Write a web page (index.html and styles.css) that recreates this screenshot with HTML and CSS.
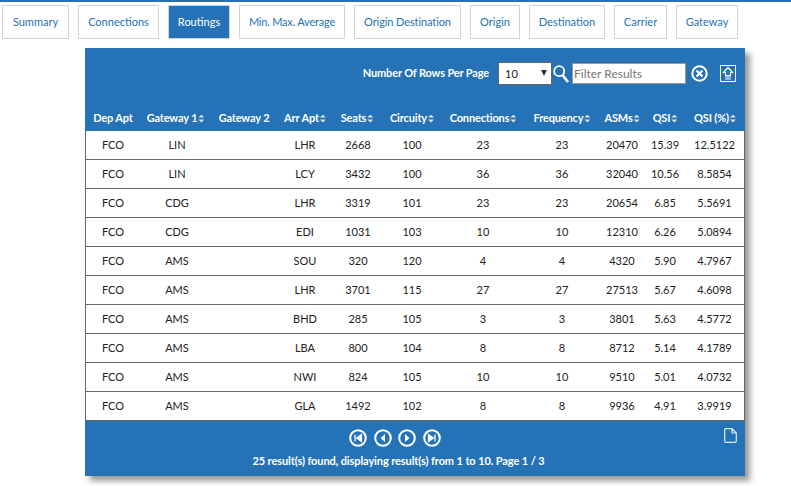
FILE: index.html
```html
<!DOCTYPE html>
<html lang="en">

<head>
    <meta charset="UTF-8">
    <title>Routings</title>
    <link rel="stylesheet" href="styles.css">
</head>

<body>
    <ul class="tabs">
        <li class="tab tab-summary">Summary</li>
        <li class="tab tab-connections">Connections</li>
        <li class="tab tab-routings active">Routings</li>
        <li class="tab tab-minmax">Min. Max. Average</li>
        <li class="tab tab-od">Origin Destination</li>
        <li class="tab tab-origin">Origin</li>
        <li class="tab tab-destination">Destination</li>
        <li class="tab tab-carrier">Carrier</li>
        <li class="tab tab-gateway">Gateway</li>
    </ul>

    <div class="panel">
        <div class="toolbar">
            <span class="rows-label">Number Of Rows Per Page</span>
            <div class="rows-select"><span>10</span><i class="caret"></i></div>
            <svg class="search-icon" width="16" height="18" viewBox="0 0 16 18">
                <circle cx="6.2" cy="6.2" r="5" fill="none" stroke="#fff" stroke-width="1.8" />
                <path d="M9.5 10 L15 17" stroke="#fff" stroke-width="2.6" />
            </svg>
            <div class="filter-input">Filter Results</div>
            <svg class="clear-icon" width="17" height="17" viewBox="0 0 17 17">
                <circle cx="8.5" cy="8.5" r="7.2" fill="none" stroke="#fff" stroke-width="2" />
                <path d="M5.5 5.5 L11.5 11.5 M11.5 5.5 L5.5 11.5" stroke="#fff" stroke-width="2.2" />
            </svg>
            <svg class="export-icon" width="16" height="17" viewBox="0 0 16 17">
                <rect x="0.5" y="0.5" width="15" height="16" fill="none" stroke="#fff" />
                <path d="M8 2.5 L12.5 7.5 H10.5 V10.5 H5.5 V7.5 H3.5 Z" fill="none" stroke="#fff" stroke-width="1.2" />
                <path d="M5 12 H11 M5 14 H11" stroke="#fff" stroke-width="1.2" />
            </svg>
        </div>

        <table class="grid">
            <thead>
                <tr>
                    <th class="c-dep">Dep Apt</th>
                    <th class="c-gw1 sort">Gateway 1</th>
                    <th class="c-gw2">Gateway 2</th>
                    <th class="c-arr sort">Arr Apt</th>
                    <th class="c-seats sort">Seats</th>
                    <th class="c-circ sort">Circuity</th>
                    <th class="c-conn sort">Connections</th>
                    <th class="c-freq sort">Frequency</th>
                    <th class="c-asm sort">ASMs</th>
                    <th class="c-qsi sort">QSI</th>
                    <th class="c-pct sort">QSI (%)</th>
                </tr>
            </thead>
            <tbody>
                <tr><td>FCO</td><td>LIN</td><td></td><td>LHR</td><td>2668</td><td>100</td><td>23</td><td>23</td><td>20470</td><td>15.39</td><td>12.5122</td></tr>
                <tr><td>FCO</td><td>LIN</td><td></td><td>LCY</td><td>3432</td><td>100</td><td>36</td><td>36</td><td>32040</td><td>10.56</td><td>8.5854</td></tr>
                <tr><td>FCO</td><td>CDG</td><td></td><td>LHR</td><td>3319</td><td>101</td><td>23</td><td>23</td><td>20654</td><td>6.85</td><td>5.5691</td></tr>
                <tr><td>FCO</td><td>CDG</td><td></td><td>EDI</td><td>1031</td><td>103</td><td>10</td><td>10</td><td>12310</td><td>6.26</td><td>5.0894</td></tr>
                <tr><td>FCO</td><td>AMS</td><td></td><td>SOU</td><td>320</td><td>120</td><td>4</td><td>4</td><td>4320</td><td>5.90</td><td>4.7967</td></tr>
                <tr><td>FCO</td><td>AMS</td><td></td><td>LHR</td><td>3701</td><td>115</td><td>27</td><td>27</td><td>27513</td><td>5.67</td><td>4.6098</td></tr>
                <tr><td>FCO</td><td>AMS</td><td></td><td>BHD</td><td>285</td><td>105</td><td>3</td><td>3</td><td>3801</td><td>5.63</td><td>4.5772</td></tr>
                <tr><td>FCO</td><td>AMS</td><td></td><td>LBA</td><td>800</td><td>104</td><td>8</td><td>8</td><td>8712</td><td>5.14</td><td>4.1789</td></tr>
                <tr><td>FCO</td><td>AMS</td><td></td><td>NWI</td><td>824</td><td>105</td><td>10</td><td>10</td><td>9510</td><td>5.01</td><td>4.0732</td></tr>
                <tr><td>FCO</td><td>AMS</td><td></td><td>GLA</td><td>1492</td><td>102</td><td>8</td><td>8</td><td>9936</td><td>4.91</td><td>3.9919</td></tr>
            </tbody>
        </table>

        <div class="footer">
            <div class="pager">
                <svg width="18" height="18" viewBox="0 0 18 18"><circle cx="9" cy="9" r="7.8" fill="none" stroke="#fff" stroke-width="2" /><path d="M6 5.5 V12.5 M12.5 5.5 L7.5 9 L12.5 12.5 Z" fill="#fff" stroke="#fff" stroke-width="1.2" /></svg>
                <svg width="18" height="18" viewBox="0 0 18 18"><circle cx="9" cy="9" r="7.8" fill="none" stroke="#fff" stroke-width="2" /><path d="M11 5 L6.5 9 L11 13 Z" fill="#fff" /></svg>
                <svg width="18" height="18" viewBox="0 0 18 18"><circle cx="9" cy="9" r="7.8" fill="none" stroke="#fff" stroke-width="2" /><path d="M7 5 L11.5 9 L7 13 Z" fill="#fff" /></svg>
                <svg width="18" height="18" viewBox="0 0 18 18"><circle cx="9" cy="9" r="7.8" fill="none" stroke="#fff" stroke-width="2" /><path d="M12 5.5 V12.5 M5.5 5.5 L10.5 9 L5.5 12.5 Z" fill="#fff" stroke="#fff" stroke-width="1.2" /></svg>
            </div>
            <div class="summary">25 result(s) found, displaying result(s) from 1 to 10. Page 1 / 3</div>
            <svg class="page-icon" width="13" height="15" viewBox="0 0 13 15">
                <path d="M1.5 0.7 H8 L12.3 5 V13 Q12.3 14.3 11 14.3 H2 Q0.7 14.3 0.7 13 V1.5 Z M8 0.7 V5 H12.3" fill="none" stroke="#dce8f4" stroke-width="1.2" />
            </svg>
        </div>
    </div>
</body>

</html>
```

FILE: styles.css
```css
* {
    box-sizing: border-box;
}

body {
    margin: 0;
    min-height: 486px;
    background-color: #fff;
    border-top: 2px solid #2573b6;
    font-family: "Lato", "Open Sans", sans-serif;
    font-size: 11px;
    color: #333;
}

/* Tabs */
.tabs {
    display: flex;
    gap: 9px;
    list-style: none;
    margin: 3px 0 0 2px;
    padding: 0;
}

.tab {
    height: 34px;
    line-height: 32px;
    text-align: center;
    border: 1px solid #d4d4d4;
    color: #2573b6;
    white-space: nowrap;
}

.tab.active {
    background-color: #2573b6;
    color: #fff;
}

.tab-summary { width: 67px; }
.tab-connections { width: 81px; }
.tab-routings { width: 62px; }
.tab-minmax { width: 106px; letter-spacing: -0.2px; }
.tab-od { width: 107px; letter-spacing: -0.1px; }
.tab-origin { width: 50px; }
.tab-destination { width: 76px; }
.tab-carrier { width: 53px; }
.tab-gateway { width: 62px; }

/* Panel */
.panel {
    width: 660px;
    margin: 9px 0 0 85px;
    background-color: #2573b6;
    box-shadow: 5px 5px 6px rgba(0, 0, 0, 0.4);
}

.toolbar {
    display: flex;
    align-items: center;
    height: 55px;
    padding: 0 9px 4px 0;
    justify-content: flex-end;
    color: #fff;
}

.rows-label {
    font-weight: 700;
    letter-spacing: -0.15px;
    margin-right: 9px;
    margin-bottom: 3px;
}

.rows-select {
    display: flex;
    align-items: center;
    justify-content: space-between;
    width: 54px;
    height: 23px;
    padding: 0 4px 0 6px;
    background-color: #fff;
    border: 1px solid #666;
    color: #222;
}

.caret {
    width: 0;
    height: 0;
    border-left: 3.5px solid transparent;
    border-right: 3.5px solid transparent;
    border-top: 6px solid #333;
    margin-bottom: 2px;
}

.search-icon {
    margin: 0 3px 0 1px;
}

.filter-input {
    width: 114px;
    height: 21px;
    line-height: 19px;
    padding-left: 1px;
    background-color: #fff;
    border: 1px solid #999;
    color: #777;
    font-size: 12px;
}

.clear-icon {
    margin: 0 12px 0 5px;
}

/* Table */
.grid {
    width: 100%;
    table-layout: fixed;
    border-collapse: separate;
    border-spacing: 0;
    text-align: center;
}

.grid th {
    height: 28px;
    padding: 0;
    color: #fff;
    font-weight: 700;
    letter-spacing: -0.15px;
    white-space: nowrap;
}

.sort::after {
    content: "";
    display: inline-block;
    width: 6px;
    height: 8px;
    margin-left: 1px;
    vertical-align: -1px;
    background-color: #d5e3f1;
    clip-path: path("M3 0L6 3H0ZM0 5H6L3 8Z");
}

.grid td {
    height: 29px;
    padding: 0 0 2px;
    background-color: #fff;
    border-bottom: 1px solid #666;
    color: #222;
}

.grid td:first-child {
    padding-right: 1px;
    border-left: 1px solid #666;
}

.grid td:last-child {
    border-right: 1px solid #666;
}

.grid .c-gw1 { padding-right: 3px; }
.grid .c-gw2 { padding-right: 2px; }
.grid .c-seats { padding-right: 2px; }

.c-dep { width: 56px; }
.c-gw1 { width: 72px; }
.c-gw2 { width: 64px; }
.c-arr { width: 56px; }
.c-seats { width: 50px; }
.c-circ { width: 58px; }
.c-conn { width: 84px; }
.c-freq { width: 74px; }
.c-asm { width: 46px; }
.c-qsi { width: 40px; }
.c-pct { width: 60px; }

/* Footer */
.footer {
    position: relative;
    height: 55px;
    padding: 8px 33px 0 0;
    text-align: center;
    color: #fff;
}

.pager {
    display: flex;
    justify-content: center;
    gap: 6.4px;
    height: 18px;
    margin-right: 7px;
}

.summary {
    margin-top: 7px;
    font-weight: 700;
    letter-spacing: -0.1px;
}

.page-icon {
    position: absolute;
    top: 7px;
    right: 8px;
}
```
